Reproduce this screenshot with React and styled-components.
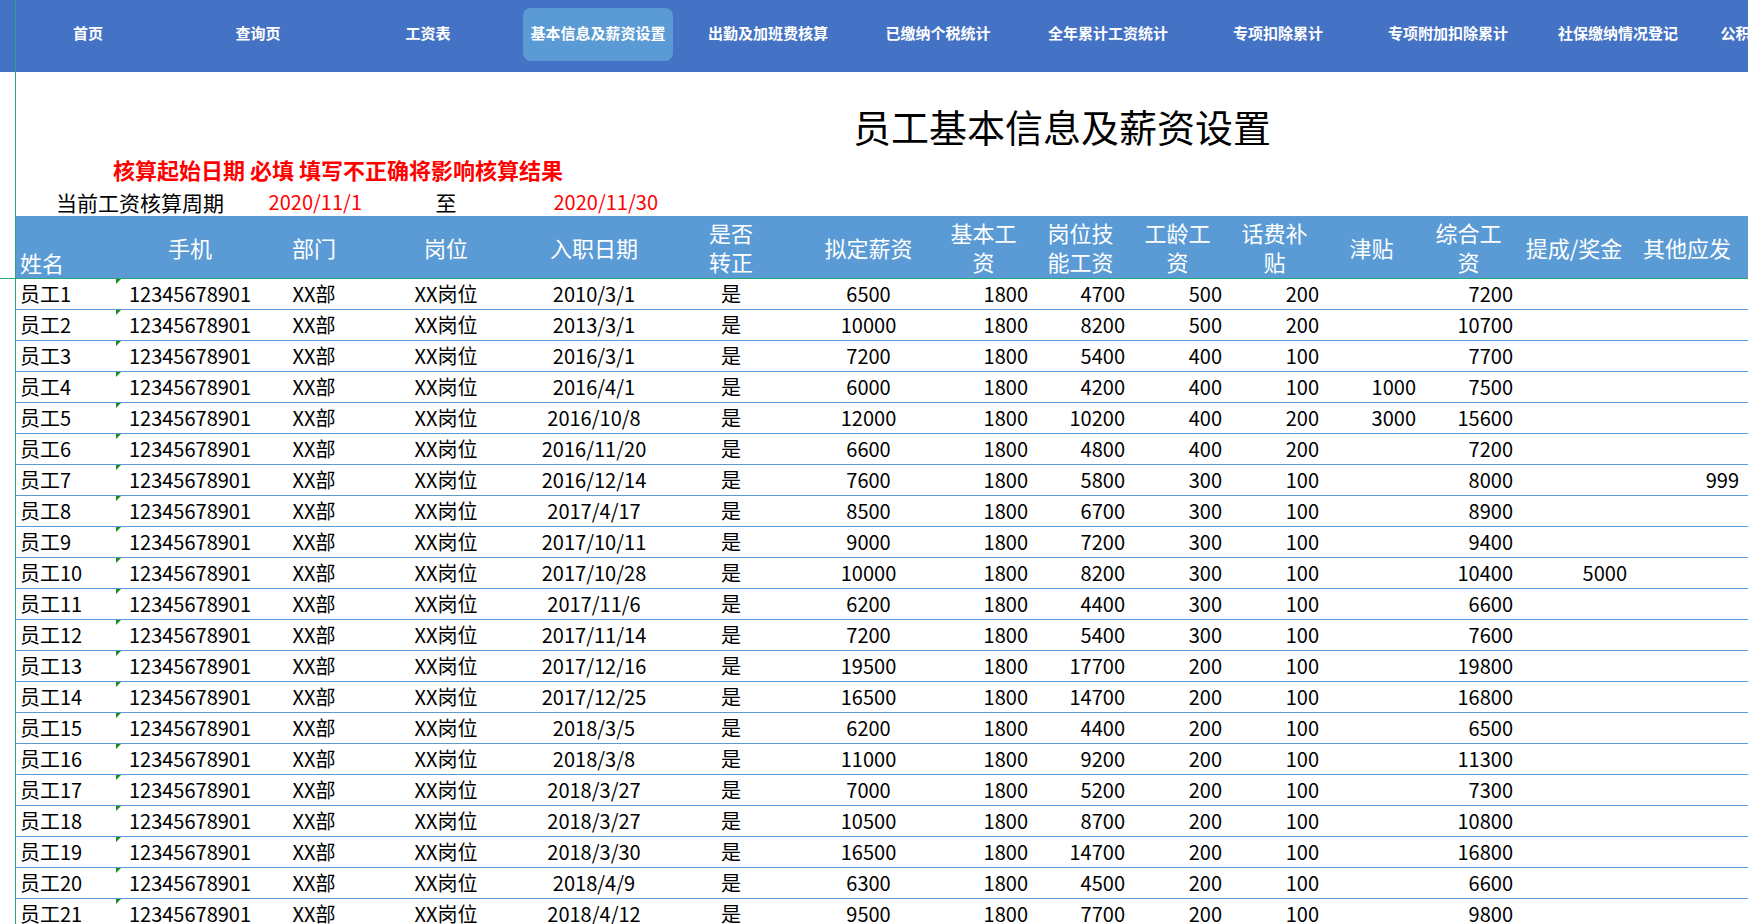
import styled, { createGlobalStyle } from 'styled-components'

const GlobalStyle = createGlobalStyle`
  html, body {
    margin: 0;
    padding: 0;
    background: #fff;
    overflow: hidden;
  }
  body {
    font-family: "Noto Sans CJK SC", "Noto Sans", sans-serif;
  }
`

// column widths of the sheet, measured from the screenshot
const COLS = '100px 148px 100px 164px 132px 142px 133px 97px 97px 97px 97px 97px 97px 114px 112px 1fr'

const tabs = [
  '首页', '查询页', '工资表', '基本信息及薪资设置', '出勤及加班费核算', '已缴纳个税统计',
  '全年累计工资统计', '专项扣除累计', '专项附加扣除累计', '社保缴纳情况登记', '公积金缴纳情况登记'
]

const headers = [
  ['姓名'], ['手机'], ['部门'], ['岗位'], ['入职日期'], ['是否', '转正'], ['拟定薪资'],
  ['基本工', '资'], ['岗位技', '能工资'], ['工龄工', '资'], ['话费补', '贴'], ['津贴'],
  ['综合工', '资'], ['提成/奖金'], ['其他应发']
]

const rows = [
  ['2010/3/1', 6500, 4700, 500, 200, '', 7200, '', ''],
  ['2013/3/1', 10000, 8200, 500, 200, '', 10700, '', ''],
  ['2016/3/1', 7200, 5400, 400, 100, '', 7700, '', ''],
  ['2016/4/1', 6000, 4200, 400, 100, 1000, 7500, '', ''],
  ['2016/10/8', 12000, 10200, 400, 200, 3000, 15600, '', ''],
  ['2016/11/20', 6600, 4800, 400, 200, '', 7200, '', ''],
  ['2016/12/14', 7600, 5800, 300, 100, '', 8000, '', 999],
  ['2017/4/17', 8500, 6700, 300, 100, '', 8900, '', ''],
  ['2017/10/11', 9000, 7200, 300, 100, '', 9400, '', ''],
  ['2017/10/28', 10000, 8200, 300, 100, '', 10400, 5000, ''],
  ['2017/11/6', 6200, 4400, 300, 100, '', 6600, '', ''],
  ['2017/11/14', 7200, 5400, 300, 100, '', 7600, '', ''],
  ['2017/12/16', 19500, 17700, 200, 100, '', 19800, '', ''],
  ['2017/12/25', 16500, 14700, 200, 100, '', 16800, '', ''],
  ['2018/3/5', 6200, 4400, 200, 100, '', 6500, '', ''],
  ['2018/3/8', 11000, 9200, 200, 100, '', 11300, '', ''],
  ['2018/3/27', 7000, 5200, 200, 100, '', 7300, '', ''],
  ['2018/3/27', 10500, 8700, 200, 100, '', 10800, '', ''],
  ['2018/3/30', 16500, 14700, 200, 100, '', 16800, '', ''],
  ['2018/4/9', 6300, 4500, 200, 100, '', 6600, '', ''],
  ['2018/4/12', 9500, 7700, 200, 100, '', 9800, '', ''],
  ['2018/4/20', 8000, 6200, 200, 100, '', 8300, '', '']
]

const Page = styled.div`
  position: relative;
  width: 1748px;
  height: 924px;
  overflow: hidden;
  background: #fff;
`

const FreezeLine = styled.div`
  position: absolute;
  left: 15px;
  top: 0;
  bottom: 0;
  width: 1px;
  background: #2aa876;
  z-index: 2;
`

const Nav = styled.nav`
  height: 72px;
  background: #4472c4;
  display: flex;
  gap: 20px;
  padding: 8px 0 0 13px;
  box-sizing: border-box;
  white-space: nowrap;
`

const Tab = styled.div`
  flex: 0 0 150px;
  height: 53px;
  padding-bottom: 4px;
  box-sizing: border-box;
  border-radius: 8px;
  background: ${p => (p.$active ? '#5b9bd5' : 'transparent')};
  color: #fff;
  font-size: 15px;
  font-weight: 700;
  display: flex;
  align-items: center;
  justify-content: center;
`

const Title = styled.h1`
  margin: 0;
  padding: 31px 0 0 376px;
  height: 80px;
  box-sizing: border-box;
  display: flex;
  justify-content: center;
  font-size: 38px;
  line-height: 46px;
  font-weight: 400;
  color: #000;
`

const SheetRow = styled.div`
  display: grid;
  grid-template-columns: ${COLS};
  margin-left: 16px;
`

const NoteRow = styled(SheetRow)`
  padding-top: 5px;
  height: 31px;
  box-sizing: border-box;
`

const Note = styled.div`
  grid-column: 1 / 6;
  text-align: center;
  color: #ff0000;
  font-size: 22px;
  font-weight: 700;
  line-height: 24px;
  white-space: pre;
`

const PeriodRow = styled(SheetRow)`
  padding: 7px 0 2px;
  font-size: 20px;
  line-height: 24px;
`

const PeriodCell = styled.div`
  grid-column: ${p => p.$col};
  text-align: ${p => p.$align || 'center'};
  padding-right: ${p => (p.$align === 'right' ? '2px' : '0')};
  color: ${p => (p.$red ? '#ff0000' : '#000')};
  font-size: ${p => (p.$label ? '21px' : '20px')};
  white-space: nowrap;
`

const HeaderBand = styled.div`
  padding-left: 16px;
  border-bottom: 1px solid #2aa876;
`

const HeaderGrid = styled.div`
  display: grid;
  grid-template-columns: ${COLS};
  height: 62px;
  background: #5b9bd5;
`

const HeadCell = styled.div`
  color: #fff;
  font-size: 22px;
  line-height: 29px;
  display: flex;
  flex-direction: column;
  align-items: ${p => (p.$corner ? 'flex-start' : 'center')};
  justify-content: ${p => (p.$corner ? 'flex-end' : 'center')};
  padding-left: ${p => (p.$corner ? '4px' : '0')};
  padding-bottom: ${p => (p.$corner ? '1px' : '0')};
  white-space: nowrap;
`

const DataRow = styled(SheetRow)`
  height: 31px;
  border-bottom: 1px solid #5b9bd5;
  box-sizing: border-box;
  font-size: 20px;
  line-height: 30px;
  color: #000;
`

const Cell = styled.div`
  position: relative;
  text-align: ${p => p.$align || 'center'};
  padding: 0 4px;
  white-space: nowrap;
`

const TextCell = styled(Cell)`
  &::before {
    content: '';
    position: absolute;
    left: 0;
    top: 0;
    border-style: solid;
    border-width: 5px 5px 0 0;
    border-color: #1a8a1a transparent transparent transparent;
  }
`

function App () {
  return (
    <Page>
      <GlobalStyle />
      <FreezeLine />
      <Nav>
        {tabs.map(t => (
          <Tab key={t} $active={t === '基本信息及薪资设置'}>{t}</Tab>
        ))}
      </Nav>

      <Title>员工基本信息及薪资设置</Title>

      <NoteRow>
        <Note>核算起始日期 必填 填写不正确将影响核算结果</Note>
      </NoteRow>

      <PeriodRow>
        <PeriodCell $col='1 / 3' $label>当前工资核算周期</PeriodCell>
        <PeriodCell $col='3' $align='right' $red>2020/11/1</PeriodCell>
        <PeriodCell $col='4' $label>至</PeriodCell>
        <PeriodCell $col='5' $align='right' $red>2020/11/30</PeriodCell>
      </PeriodRow>

      <HeaderBand>
        <HeaderGrid>
          {headers.map((lines, i) => (
            <HeadCell key={i} $corner={i === 0}>
              {lines.map(l => <span key={l}>{l}</span>)}
            </HeadCell>
          ))}
        </HeaderGrid>
      </HeaderBand>

      {rows.map((r, i) => (
        <DataRow key={i}>
          <Cell $align='left'>员工{i + 1}</Cell>
          <TextCell>12345678901</TextCell>
          <Cell>XX部</Cell>
          <Cell>XX岗位</Cell>
          <Cell>{r[0]}</Cell>
          <Cell>是</Cell>
          <Cell>{r[1]}</Cell>
          <Cell $align='right'>1800</Cell>
          <Cell $align='right'>{r[2]}</Cell>
          <Cell $align='right'>{r[3]}</Cell>
          <Cell $align='right'>{r[4]}</Cell>
          <Cell $align='right'>{r[5]}</Cell>
          <Cell $align='right'>{r[6]}</Cell>
          <Cell $align='right'>{r[7]}</Cell>
          <Cell $align='right'>{r[8]}</Cell>
          <Cell />
        </DataRow>
      ))}
    </Page>
  )
}

export default App
